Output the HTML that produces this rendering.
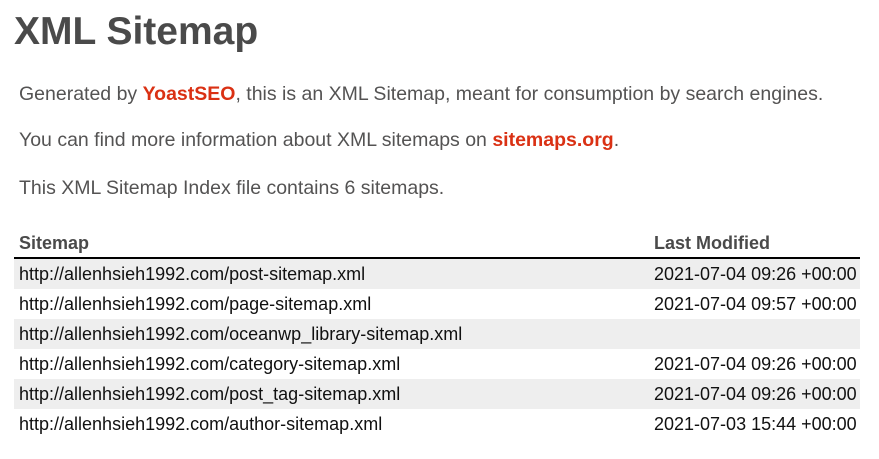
<!DOCTYPE html>
<html><head><meta charset="utf-8"><style>
html,body{margin:0;padding:0;background:#fff;width:879px;height:459px;overflow:hidden}
body{font-family:"Liberation Sans",Arial,sans-serif;color:#545353;position:relative}
h1{position:absolute;left:14px;top:8px;margin:0;font-size:39px;font-weight:bold;color:#4a4a4a;line-height:48px}
.p{position:absolute;left:19px;font-size:19.5px;line-height:22px;margin:0;white-space:nowrap}
.p a{color:#da3114;font-weight:bold;text-decoration:none}
table{position:absolute;left:14px;top:230px;width:846px;border-collapse:collapse;table-layout:fixed}
th{text-align:left;font-size:18px;font-weight:bold;color:#4a4a4a;height:27px;padding:0 5px;border-bottom:2px solid #000;vertical-align:middle}
td{font-size:18px;color:#111;height:30px;padding:0 5px;vertical-align:middle;white-space:nowrap}
tbody tr:nth-child(odd) td{background:#eee}
td.d,th.d{width:201px}
</style></head><body>
<h1>XML Sitemap</h1>
<p class="p" style="top:83px">Generated by <a>YoastSEO</a>, this is an XML Sitemap, meant for consumption by search engines.</p>
<p class="p" style="top:129px">You can find more information about XML sitemaps on <a>sitemaps.org</a>.</p>
<p class="p" style="top:177px">This XML Sitemap Index file contains 6 sitemaps.</p>
<table>
<thead><tr><th>Sitemap</th><th class="d">Last Modified</th></tr></thead>
<tbody>
<tr><td>http://allenhsieh1992.com/post-sitemap.xml</td><td class="d">2021-07-04 09:26 +00:00</td></tr>
<tr><td>http://allenhsieh1992.com/page-sitemap.xml</td><td class="d">2021-07-04 09:57 +00:00</td></tr>
<tr><td>http://allenhsieh1992.com/oceanwp_library-sitemap.xml</td><td class="d"></td></tr>
<tr><td>http://allenhsieh1992.com/category-sitemap.xml</td><td class="d">2021-07-04 09:26 +00:00</td></tr>
<tr><td>http://allenhsieh1992.com/post_tag-sitemap.xml</td><td class="d">2021-07-04 09:26 +00:00</td></tr>
<tr><td>http://allenhsieh1992.com/author-sitemap.xml</td><td class="d">2021-07-03 15:44 +00:00</td></tr>
</tbody></table>
</body></html>
